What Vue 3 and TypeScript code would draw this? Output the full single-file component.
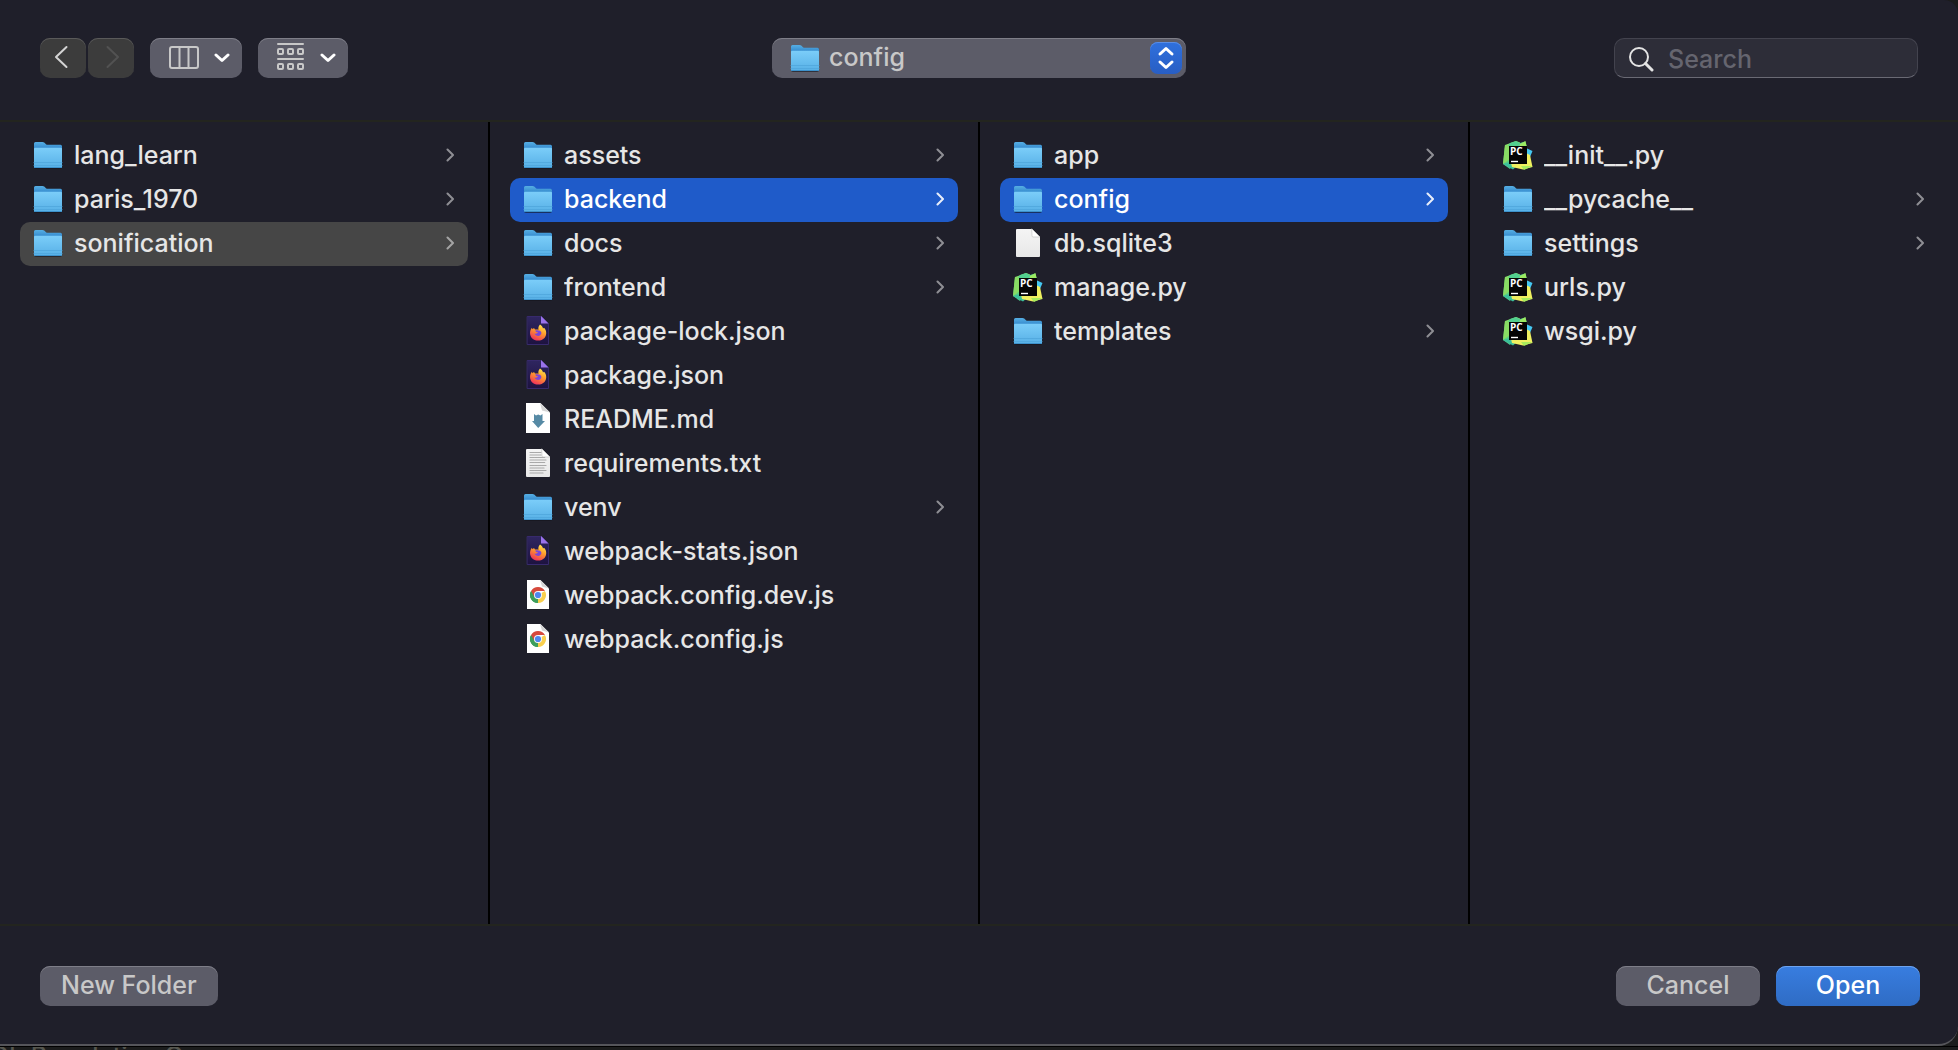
<script setup lang="ts">
import { ref } from 'vue'

type Kind = 'folder' | 'firefox' | 'markdown' | 'text' | 'chrome' | 'blank' | 'pycharm'

interface Entry {
  name: string
  kind: Kind
}

interface Column {
  label: string
  selected: string | null
  entries: Entry[]
}

const entry = (name: string, kind: Kind = 'folder'): Entry => ({ name, kind })

const columns = ref<Column[]>([
  {
    label: 'Projects',
    selected: 'sonification',
    entries: [entry('lang_learn'), entry('paris_1970'), entry('sonification')],
  },
  {
    label: 'sonification',
    selected: 'backend',
    entries: [
      entry('assets'),
      entry('backend'),
      entry('docs'),
      entry('frontend'),
      entry('package-lock.json', 'firefox'),
      entry('package.json', 'firefox'),
      entry('README.md', 'markdown'),
      entry('requirements.txt', 'text'),
      entry('venv'),
      entry('webpack-stats.json', 'firefox'),
      entry('webpack.config.dev.js', 'chrome'),
      entry('webpack.config.js', 'chrome'),
    ],
  },
  {
    label: 'backend',
    selected: 'config',
    entries: [
      entry('app'),
      entry('config'),
      entry('db.sqlite3', 'blank'),
      entry('manage.py', 'pycharm'),
      entry('templates'),
    ],
  },
  {
    label: 'config',
    selected: null,
    entries: [
      entry('__init__.py', 'pycharm'),
      entry('__pycache__'),
      entry('settings'),
      entry('urls.py', 'pycharm'),
      entry('wsgi.py', 'pycharm'),
    ],
  },
])

const location = ref('config')
const query = ref('')
</script>

<template>
  <div class="screen">
    <svg class="sprite" aria-hidden="true">
      <defs>
        <linearGradient id="folder-front" x1="0" y1="0" x2="0" y2="1">
          <stop offset="0" stop-color="#7bcdf9" />
          <stop offset="1" stop-color="#57b0e6" />
        </linearGradient>
        <linearGradient id="folder-back" x1="0" y1="0" x2="0" y2="1">
          <stop offset="0" stop-color="#56aee3" />
          <stop offset="0.6" stop-color="#3489cd" />
        </linearGradient>
        <linearGradient id="paper" x1="0" y1="0" x2="0" y2="1">
          <stop offset="0" stop-color="#f4f4f4" />
          <stop offset="1" stop-color="#e8e8e8" />
        </linearGradient>
        <linearGradient id="fox-page" x1="0" y1="0" x2="0" y2="1">
          <stop offset="0" stop-color="#2f2660" />
          <stop offset="1" stop-color="#1d1240" />
        </linearGradient>
        <linearGradient id="fox-fire" x1="0.8" y1="0" x2="0.3" y2="1">
          <stop offset="0" stop-color="#fff04d" />
          <stop offset="0.45" stop-color="#ff9a2c" />
          <stop offset="1" stop-color="#ee2f5c" />
        </linearGradient>
        <linearGradient id="pc-left" x1="0" y1="0" x2="0" y2="1">
          <stop offset="0" stop-color="#8fe35f" />
          <stop offset="1" stop-color="#4cc98e" />
        </linearGradient>
      </defs>
      <symbol id="icon-folder" viewBox="0 0 32 32">
        <rect x="2" y="6" width="28" height="24" rx="2" fill="#14141c" opacity="0.6" />
        <path d="M2 4.500Q2 3 3.500 3H10.500Q11.500 3 12.200 3.600L14 5.200Q14.600 5.800 15.600 5.800H28.500Q30 5.800 30 7.300V14H2Z" fill="url(#folder-back)" />
        <path d="M2 9.800Q2 8.800 3 8.800H29Q30 8.800 30 9.800V27.500Q30 29 28.500 29H3.500Q2 29 2 27.500Z" fill="url(#folder-front)" />
        <path d="M2 23.500H30M2 26.500H30" stroke="#4fa6dc" stroke-width="0.8" />
        <path d="M2.500 28.500H29.500" stroke="#3d91cb" stroke-width="1" />
      </symbol>
      <symbol id="icon-blank" viewBox="0 0 32 32">
        <path d="M5 2H20L28 10V29Q28 30 27 30H5Q4 30 4 29V3Q4 2 5 2Z" fill="url(#paper)" />
        <path d="M20 2L28 10H21Q20 10 20 9Z" fill="#fff" stroke="#bdbdbd" stroke-width="0.6" />
      </symbol>
      <symbol id="icon-text" viewBox="0 0 32 32">
        <path d="M5 2H20L28 10V29Q28 30 27 30H5Q4 30 4 29V3Q4 2 5 2Z" fill="url(#paper)" />
        <path d="M8 5.500H19M8 8H19M8 10.500H23M8 13H24M8 15.500H23M8 18.500H24M8 21H22M8 23.500H24M8 26H21" stroke="#a9a9a9" stroke-width="1.200" stroke-dasharray="4 0.6 2.500 0.500" />
        <path d="M20 2L28 10H21Q20 10 20 9Z" fill="#fff" stroke="#bdbdbd" stroke-width="0.6" />
      </symbol>
      <symbol id="icon-markdown" viewBox="0 0 32 32">
        <path d="M4 0H18.500L28 9.500V30H4Z" fill="#fff" />
        <path d="M18 0L28 9.500L20 7.500Z" fill="#d5d5d5" />
        <path d="M12 11L14 12.600L16.200 11.600L18.400 12.600L20.500 11V18H23L16.200 25L10 18H12Z" fill="#568aa5" />
      </symbol>
      <symbol id="icon-chrome" viewBox="0 0 32 32">
        <path d="M5 1H18.500L27 9.500V30H5Z" fill="#fff" />
        <path d="M18 1L27 9.500L20 7.500Z" fill="#d5d5d5" />
        <g transform="translate(0 -1)">
          <path d="M16 17L9.070 13A8 8 0 0 0 16 25Z" fill="#3d9e5c" />
          <path d="M16 17L22.930 13A8 8 0 0 1 16 25Z" fill="#f9cf4d" />
          <path d="M19.460 19L16 25L13 20Z" fill="#f9cf4d" />
          <path d="M16 25L19.460 19L16 17L12.540 19Z" fill="#f9cf4d" />
          <path d="M9.070 13L12.540 19L16 21V25A8 8 0 0 1 9.070 13Z" fill="#3d9e5c" />
          <path d="M16 13H22.930A8 8 0 0 0 9.070 13L12.540 19L16 17Z" fill="#d6493c" />
          <circle cx="16" cy="17" r="4" fill="#f4f6fb" />
          <circle cx="16" cy="17" r="3.100" fill="#4f86ee" />
        </g>
      </symbol>
      <symbol id="icon-firefox" viewBox="0 0 32 32">
        <g transform="translate(0 -1)">
          <path d="M5.500 2.500H19.500L26.500 9.500V30.500H5.500Z" fill="url(#fox-page)" stroke="#372a6c" />
          <path d="M19 2V9.500H26.500Z" fill="#9a73ea" />
          <path d="M18 10.500C20 12 20.800 13 21 14.500L22 13.700C24.800 16 25 21 22.500 24C19.500 27.300 13 27.500 10 24.200C7.300 21 7.500 16.500 10 13.800L10.400 15.200L12 14L13 15.600C14.500 15.200 15.600 15.400 16.500 15.800C16 14 16.500 12 18 10.500Z" fill="url(#fox-fire)" />
          <path d="M13.200 16.500C15.500 15.800 19 16 19.400 18.800C19.500 21.500 16.500 22.700 14.300 21.500C12.800 20.700 12.600 19.500 12.600 19.500C14 20 15.500 19.500 16 18.300C14.500 18.500 13.500 17.800 13.200 16.500Z" fill="#7c45d8" />
        </g>
      </symbol>
      <symbol id="icon-pycharm" viewBox="0 0 32 32">
        <path d="M3 6L14 2L18 3.500L17 16L8 30L1 25Z" fill="url(#pc-left)" />
        <path d="M8 4L14 2L18 4L23 2.500L25 8H5Z" fill="#52cf90" />
        <path d="M18 5L23.500 2L25 9H17Z" fill="#9bea62" />
        <path d="M3 6L8 7V20L1 25Z" fill="#89dc63" />
        <path d="M1 25L8 23L15 27L11 30.500Z" fill="#3bbf9b" />
        <path d="M24 9L30.500 12L28 18H24Z" fill="#45c8f2" />
        <path d="M24 14L28 16L30.500 28L21 30.500L10 28L9 24Z" fill="#f0f060" />
        <path d="M19 27L30.500 27L22 31Z" fill="#a8ec5c" />
        <rect x="7" y="7" width="18" height="18" fill="#050505" />
        <path d="M9 22.500H16" stroke="#fff" stroke-width="1.400" stroke-linecap="butt" />
      </symbol>
    </svg>

    <main class="dialog">
      <header class="toolbar">
        <div class="tools">
          <div class="history">
            <button type="button" class="nav" aria-label="Back">
              <svg width="14" height="24" viewBox="0 0 14 24"><path d="M12.500 2L2 12L12.500 22" /></svg>
            </button>
            <button type="button" class="nav" aria-label="Forward" disabled>
              <svg width="14" height="24" viewBox="0 0 14 24"><path d="M1.500 2L12 12L1.500 22" /></svg>
            </button>
          </div>
          <button type="button" class="push menu" aria-label="View as columns">
            <svg class="glyph" width="32" height="28" viewBox="0 0 32 28">
              <rect x="2" y="4" width="28" height="21" rx="2" />
              <path d="M11.500 4V25M20.500 4V25" />
            </svg>
            <svg class="caret" width="16" height="12" viewBox="0 0 16 12"><path d="M2 3L8 8.500L14 3" /></svg>
          </button>
          <button type="button" class="push menu" aria-label="Group items">
            <svg class="glyph" width="30" height="28" viewBox="0 0 30 28">
              <path d="M2 1H27M2 16H27" />
              <rect v-for="x in [2, 12, 22]" :key="x" :x="x" y="6" width="5" height="5" rx="1" />
              <rect v-for="x in [2, 12, 22]" :key="x + 50" :x="x" y="21" width="5" height="5" rx="1" />
            </svg>
            <svg class="caret" width="16" height="12" viewBox="0 0 16 12"><path d="M2 3L8 8.500L14 3" /></svg>
          </button>
        </div>

        <div class="location">
          <select v-model="location" class="push" aria-label="Location">
            <option value="config">config</option>
            <option value="backend">backend</option>
            <option value="sonification">sonification</option>
          </select>
          <svg class="place" width="32" height="32"><use href="#icon-folder" /></svg>
          <span class="stepper">
            <svg width="18" height="24" viewBox="0 0 18 24"><path d="M3 8L9 2.500L15 8M3 16L9 21.500L15 16" /></svg>
          </span>
        </div>

        <label class="search">
          <svg width="26" height="26" viewBox="0 0 26 26">
            <circle cx="10" cy="11" r="9" />
            <path d="M16.500 17.500L23 24" stroke-width="3" />
          </svg>
          <input v-model="query" type="search" placeholder="Search" aria-label="Search" />
        </label>
      </header>

      <section class="browser" aria-label="Files">
        <ul v-for="(column, index) in columns" :key="column.label" class="column" :aria-label="column.label">
          <li v-for="item in column.entries" :key="item.name">
            <button
              type="button"
              class="row"
              :class="{ chosen: column.selected === item.name, parent: index === 0 }"
              @click="column.selected = item.name"
            >
              <svg class="icon" width="32" height="32" viewBox="0 0 32 32" aria-hidden="true">
                <use :href="'#icon-' + item.kind" />
                <text v-if="item.kind === 'pycharm'" class="badge" x="8" y="16">PC</text>
              </svg>
              <span class="name">{{ item.name }}</span>
              <svg v-if="item.kind === 'folder'" class="chevron" width="8" height="14" viewBox="0 0 8 14">
                <path d="M1.500 1.500L7 7L1.500 12.500" />
              </svg>
            </button>
          </li>
        </ul>
      </section>

      <footer class="actions">
        <button type="button" class="push">New Folder</button>
        <span class="spacer"></span>
        <button type="button" class="push answer">Cancel</button>
        <button type="button" class="push answer primary">Open</button>
      </footer>
    </main>
    <div class="behind">Oh Population C</div>
  </div>
</template>

<style>
body {
  margin: 0;
  background: #1b1c1c;
}
</style>

<style scoped>
.screen {
  display: flex;
  flex-direction: column;
  min-height: 100vh;
  color: #e6e6e6;
  font-family: Inter, 'Liberation Sans', sans-serif;
  font-size: 25px;
  font-weight: 500;
  line-height: 32px;
}

.sprite {
  position: absolute;
  width: 0;
  height: 0;
}

.dialog {
  display: flex;
  flex: 1;
  flex-direction: column;
  border-bottom: 2px solid #55555a;
  border-radius: 0 14px 20px 0;
  background: #1f1f2a;
  overflow: hidden;
}

button,
select,
input {
  box-sizing: border-box;
  margin: 0;
  border: 0;
  color: inherit;
  font: inherit;
}

svg {
  flex: none;
  fill: none;
  stroke-linecap: round;
  stroke-linejoin: round;
}

.toolbar {
  display: grid;
  grid-template-columns: 1fr 414px 1fr;
  padding: 38px 40px 42px;
  border-bottom: 2px solid #23251f;
}

.tools {
  display: flex;
  gap: 16px;
}

.history {
  display: flex;
  gap: 2px;
}

.nav {
  display: flex;
  align-items: center;
  justify-content: center;
  width: 46px;
  height: 40px;
  padding: 0 4px 2px 0;
  border-radius: 10px;
  background: #3c3c3c;
  box-shadow: inset 0 1px #5a5a5a;
  stroke: #d4d4d4;
  stroke-width: 2px;
}

.nav:disabled {
  padding: 0 0 2px 4px;
  stroke: #525252;
}

.push {
  height: 40px;
  padding: 0 21px 2px;
  border-radius: 10px;
  background: #5c5c68;
  box-shadow: inset 0 1px #7e7e88;
  color: #c8c8c8;
}

.menu {
  display: flex;
  align-items: center;
  gap: 14px;
  padding: 0 12px 2px 18px;
}

.glyph {
  stroke: #c8c8c8;
  stroke-width: 2px;
}

.caret {
  margin-top: 2px;
  stroke: #fff;
  stroke-width: 3px;
}

.location {
  position: relative;
}

.location select {
  width: 100%;
  padding: 0 48px 2px 57px;
  appearance: none;
}

.place {
  position: absolute;
  top: 4px;
  left: 17px;
}

.stepper {
  position: absolute;
  top: 4px;
  right: 4px;
  display: flex;
  align-items: center;
  justify-content: center;
  width: 32px;
  height: 32px;
  border-radius: 8px;
  background: linear-gradient(#2f70dd, #285ec4);
  box-shadow: inset 0 1px #5a8de4;
  stroke: #fff;
  stroke-width: 3px;
  pointer-events: none;
}

.search {
  display: flex;
  align-items: center;
  justify-self: end;
  box-sizing: border-box;
  gap: 13px;
  width: 304px;
  height: 40px;
  padding: 2px 14px 0;
  border: 1px solid #43434e;
  border-bottom-color: #6a6a74;
  border-radius: 10px;
  background: #2d2d38;
  stroke: #e4e4e4;
  stroke-width: 2px;
}

.search input {
  width: 100%;
  min-width: 0;
  padding: 0;
  background: transparent;
  outline: 0;
  appearance: none;
}

.search input::placeholder {
  color: #65656f;
  opacity: 1;
}

.browser {
  display: grid;
  flex: 1;
  grid-template-columns: repeat(4, minmax(0, 1fr));
  gap: 2px;
  background: #000;
}

.column {
  margin: 0;
  padding: 12px 20px;
  background: #1f1f2a;
  list-style: none;
}

.row {
  display: flex;
  align-items: center;
  gap: 10px;
  width: 100%;
  height: 44px;
  padding: 0 14px 2px 12px;
  border-radius: 10px;
  background: transparent;
  text-align: left;
}

.badge {
  fill: #fff;
  font-family: 'Open Sans', sans-serif;
  font-size: 10px;
  font-weight: 700;
}

.name {
  flex: 1;
  overflow: hidden;
  text-overflow: ellipsis;
  white-space: nowrap;
}

.chevron {
  stroke: #8e8e94;
  stroke-width: 2px;
}

.chosen {
  background: #1f5bc9;
  color: #fff;
}

.chosen .chevron {
  stroke: #e8eefa;
}

.chosen.parent {
  background: #464646;
  color: #e6e6e6;
}

.chosen.parent .chevron {
  stroke: #a4a4a4;
}

.actions {
  display: flex;
  gap: 16px;
  padding: 40px 38px 38px 40px;
  border-top: 2px solid #23251f;
}

.spacer {
  flex: 1;
}

.answer {
  width: 144px;
}

.primary {
  background: linear-gradient(#387de0, #2f6cc4);
  box-shadow: inset 0 1px #6ea3ee;
  color: #fff;
}

/* The window underneath shows as a thin strip below the dialog. */
.behind {
  height: 3px;
  border-top: 1px solid #000;
  color: #55564f;
  line-height: 18px;
  overflow: hidden;
  text-indent: -10px;
}
</style>
